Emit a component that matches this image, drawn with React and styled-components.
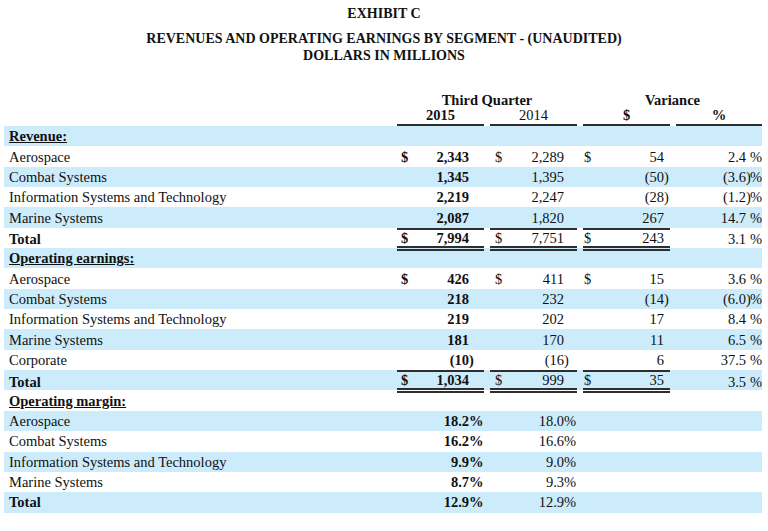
import React from 'react';
import styled, { createGlobalStyle } from 'styled-components';

const GlobalStyle = createGlobalStyle`
  html, body { margin: 0; padding: 0; background: #fff; }
  body { font-family: "Liberation Serif", "Times New Roman", serif; color: #111; }
`;

const LINE = '#2e2e2e';
const SHADE = '#ccecfc';
const GRID = `
  display: grid;
  grid-template-columns: 387px 87px 87px 87px 86px;
  column-gap: 6px;
`;

const Page = styled.div`
  width: 768px;
  height: 531px;
  overflow: hidden;
`;

const Titles = styled.header`
  padding-top: 5px;
  text-align: center;
  font-weight: bold;
  font-size: 14px;
  line-height: 17px;
`;

const TitleLine = styled.div`
  margin-top: ${(p) => p.$gap || 0}px;
`;

const Table = styled.section`
  margin: 29px 0 0 4px;
  width: 758px;
  font-size: 14.5px;
`;

const HeadRow = styled.div`
  ${GRID}
  line-height: 15px;
  font-weight: bold;
`;

const GroupHead = styled.div`
  grid-column: ${(p) => p.$span};
  text-align: center;
`;

const ColHead = styled.div`
  text-align: center;
  padding-bottom: 1px;
  border-bottom: 2px solid ${LINE};
  font-weight: ${(p) => (p.$bold ? 'bold' : 'normal')};
`;

const Row = styled.div`
  ${GRID}
  height: 20.35px;
  line-height: 16px;
  background: ${(p) => (p.$shade ? SHADE : '#fff')};
`;

const Label = styled.div`
  display: flex;
  align-items: center;
  padding-left: 5px;
  white-space: nowrap;
  font-weight: ${(p) => (p.$bold ? 'bold' : 'normal')};
  text-decoration: ${(p) => (p.$underline ? 'underline' : 'none')};
`;

const Cell = styled.div`
  display: flex;
  align-items: center;
  box-sizing: border-box;
  padding-left: ${(p) => p.$pl || 0}px;
  font-weight: ${(p) => (p.$bold ? 'bold' : 'normal')};
  border-top: ${(p) => (p.$total ? `2px solid ${LINE}` : 'none')};
  border-bottom: ${(p) => (p.$total ? `5px double ${LINE}` : 'none')};
  white-space: nowrap;
`;

const Cur = styled.span`
  flex: none;
  width: 10px;
`;

const Num = styled.span`
  flex: 1;
  text-align: right;
`;

const Suf = styled.span`
  flex: none;
  width: ${(p) => p.$w}px;
  text-align: left;
`;

const Pct = styled.span`
  flex: none;
  width: 12px;
  text-align: right;
`;

const rows = [
  { label: 'Revenue:', kind: 'section' },
  { label: 'Aerospace', cur: true, v: ['2,343', '2,289', '54', '2.4'] },
  { label: 'Combat Systems', v: ['1,345', '1,395', '(50)', '(3.6)'] },
  { label: 'Information Systems and Technology', v: ['2,219', '2,247', '(28)', '(1.2)'] },
  { label: 'Marine Systems', v: ['2,087', '1,820', '267', '14.7'] },
  { label: 'Total', kind: 'total', cur: true, v: ['7,994', '7,751', '243', '3.1'] },
  { label: 'Operating earnings:', kind: 'section' },
  { label: 'Aerospace', cur: true, v: ['426', '411', '15', '3.6'] },
  { label: 'Combat Systems', v: ['218', '232', '(14)', '(6.0)'] },
  { label: 'Information Systems and Technology', v: ['219', '202', '17', '8.4'] },
  { label: 'Marine Systems', v: ['181', '170', '11', '6.5'] },
  { label: 'Corporate', v: ['(10)', '(16)', '6', '37.5'] },
  { label: 'Total', kind: 'total', cur: true, v: ['1,034', '999', '35', '3.5'] },
  { label: 'Operating margin:', kind: 'section' },
  { label: 'Aerospace', v: ['18.2%', '18.0%'] },
  { label: 'Combat Systems', v: ['16.2%', '16.6%'] },
  { label: 'Information Systems and Technology', v: ['9.9%', '9.0%'] },
  { label: 'Marine Systems', v: ['8.7%', '9.3%'] },
  { label: 'Total', kind: 'boldLabel', v: ['12.9%', '12.9%'] },
];

const cols = [
  { pl: 4, suf: 15, bold: true },
  { pl: 5, suf: 13 },
  { pl: 1, suf: 6 },
];

function split(v) {
  if (v.endsWith(')') || v.endsWith('%')) return [v.slice(0, -1), v.slice(-1)];
  return [v, ''];
}

function ValueCell({ col, value, cur, total }) {
  if (value === undefined) return <Cell />;
  const [num, suf] = split(value);
  return (
    <Cell $pl={col.pl} $bold={col.bold} $total={total}>
      <Cur>{cur ? '$' : ''}</Cur>
      <Num>{num}</Num>
      <Suf $w={col.suf}>{suf}</Suf>
    </Cell>
  );
}

function PctCell({ value }) {
  if (value === undefined) return <Cell />;
  const [num, suf] = split(value);
  return (
    <Cell>
      <Num>{num}</Num>
      <Suf $w={4}>{suf}</Suf>
      <Pct>%</Pct>
    </Cell>
  );
}

export default function App() {
  return (
    <Page>
      <GlobalStyle />
      <Titles>
        <TitleLine>EXHIBIT C</TitleLine>
        <TitleLine $gap={8}>REVENUES AND OPERATING EARNINGS BY SEGMENT - (UNAUDITED)</TitleLine>
        <TitleLine>DOLLARS IN MILLIONS</TitleLine>
      </Titles>
      <Table>
        <HeadRow>
          <GroupHead $span="2 / span 2">Third Quarter</GroupHead>
          <GroupHead $span="4 / span 2">Variance</GroupHead>
        </HeadRow>
        <HeadRow>
          <div />
          <ColHead $bold>2015</ColHead>
          <ColHead>2014</ColHead>
          <ColHead $bold>$</ColHead>
          <ColHead $bold>%</ColHead>
        </HeadRow>
        {rows.map((r, i) => {
          const shade = i % 2 === 0;
          if (r.kind === 'section') {
            return (
              <Row key={i} $shade={shade}>
                <Label $bold $underline>{r.label}</Label>
              </Row>
            );
          }
          const total = r.kind === 'total';
          return (
            <Row key={i} $shade={shade}>
              <Label $bold={total || r.kind === 'boldLabel'}>{r.label}</Label>
              {cols.map((c, j) => (
                <ValueCell key={j} col={c} value={r.v[j]} cur={r.cur} total={total} />
              ))}
              <PctCell value={r.v[3]} />
            </Row>
          );
        })}
      </Table>
    </Page>
  );
}
